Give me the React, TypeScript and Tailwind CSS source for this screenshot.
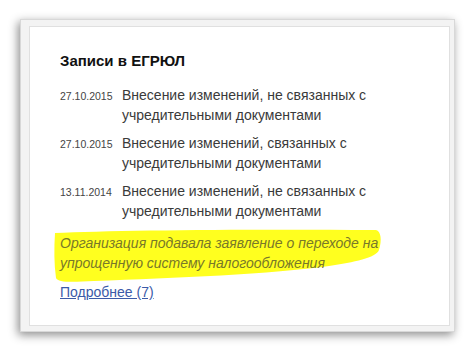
const ENTRIES = [
  { date: "27.10.2015", text: ["Внесение изменений, не связанных с", "учредительными документами"] },
  { date: "27.10.2015", text: ["Внесение изменений, связанных с", "учредительными документами"] },
  { date: "13.11.2014", text: ["Внесение изменений, не связанных с", "учредительными документами"] },
];

export default function App() {
  return (
    <div
      className="h-[351px] w-[474px] bg-white pl-[20px] pt-[19px]"
      style={{ fontFamily: '"Liberation Sans", Arial, sans-serif' }}
    >
      {/* card frame */}
      <div className="h-[313px] w-[435px] border border-[#d8d8d8] bg-[#f3f3f3] pb-[5px] pl-[8px] pr-[4px] pt-[6px] shadow-[-2px_3px_9px_rgba(0,0,0,0.45)]">
        <div className="h-full w-full border border-[#e0e0e0] bg-white pl-[30px] pt-[24px]">
          <h2 className="text-[15px] font-bold leading-[20px] text-[#111]">Записи в ЕГРЮЛ</h2>

          <div className="mt-[14px] flex flex-col gap-[8px]">
            {ENTRIES.map((e, i) => (
              <div key={i} className="flex">
                <span className="w-[62px] shrink-0 pt-[1px] text-[10.5px] leading-[20px] text-[#444]">{e.date}</span>
                <p className="text-[14px] leading-[20px] text-[#3a3a3a]">
                  {e.text[0]}
                  <br />
                  {e.text[1]}
                </p>
              </div>
            ))}
          </div>

          {/* highlighted note */}
          <div className="relative mt-[12px]">
            <svg
              className="absolute left-[-6px] top-[-5px]"
              width="330"
              height="56"
              viewBox="0 0 330 56"
            >
              <path
                d="M1 5 C60 2 200 1 322 2 C327 3 328 12 325 22 C322 30 300 34 275 38 C220 46 120 50 40 53 C20 54 4 55 2 50 C0 36 0 20 1 5 Z"
                fill="#ffff1f"
              />
            </svg>
            <p className="relative text-[14px] italic leading-[20px] text-[#78782a]">
              Организация подавала заявление о переходе на
              <br />
              упрощенную систему налогообложения
            </p>
          </div>

          <a href="#" className="mt-[9px] inline-block text-[14px] leading-[20px] text-[#3b5aa8] underline">
            Подробнее (7)
          </a>
        </div>
      </div>
    </div>
  );
}
